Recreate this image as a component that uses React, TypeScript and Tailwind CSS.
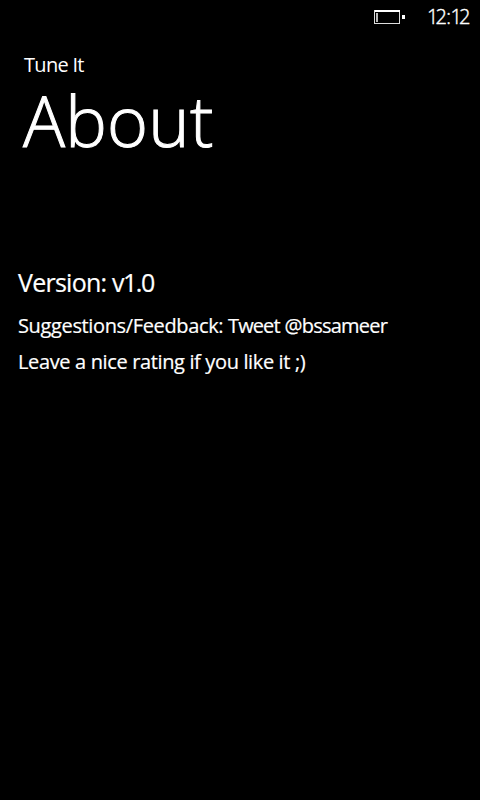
export default function App() {
  return (
    <div className="flex h-[800px] w-[480px] flex-col overflow-hidden bg-black font-['Open_Sans','Noto_Sans',sans-serif] whitespace-nowrap text-white">
      <header className="flex h-8 shrink-0 items-center pl-[374px]">
        <svg width="32" height="14" viewBox="0 0 32 14" fill="none" shapeRendering="crispEdges" className="mt-0.5 shrink-0">
          <rect x="0.5" y="0.5" width="25" height="13" stroke="#ddd" />
          <rect x="1" y="0" width="25" height="2" fill="white" />
          <rect x="2" y="3" width="2" height="9" fill="#bbb" />
          <rect x="28" y="5" width="3" height="4" fill="white" />
        </svg>
        <span className="mt-0.5 ml-[21px] text-[20px] leading-8 font-light [-webkit-text-stroke:0.4px_white]">
          <span className="tracking-[-3px]">1</span><span className="tracking-[-0.5px]">2:</span><span className="tracking-[-3px]">1</span>2
        </span>
      </header>
      <main className="flex flex-col items-start">
        <p className="mt-[21px] ml-6 h-6 text-[20px] leading-6 tracking-[-0.7px]">Tune It</p>
        <h1 className="mt-px ml-[23px] h-[84px] text-[70px] leading-[84px] font-light tracking-[0.2px] [-webkit-text-stroke:1px_white]">About</h1>
        <div className="flex flex-col items-start [-webkit-text-stroke:0.2px_white]">
          <p className="mt-[104px] ml-[18px] h-8 text-[25px] leading-8 tracking-[-0.75px]">Version: <span className="tracking-[-1.5px]">v1.0</span></p>
          <p className="mt-4 ml-[18px] h-6 text-[20px] leading-6 tracking-[-0.36px]">Suggestions/Feedback: <span className="tracking-[-0.9px]">Tweet</span> <span className="tracking-[-0.75px]">@bssameer</span></p>
          <p className="mt-3 ml-[18px] h-6 text-[20px] leading-6 tracking-[-0.36px]">Leave a nice rating if you like it ;)</p>
        </div>
      </main>
    </div>
  );
}
